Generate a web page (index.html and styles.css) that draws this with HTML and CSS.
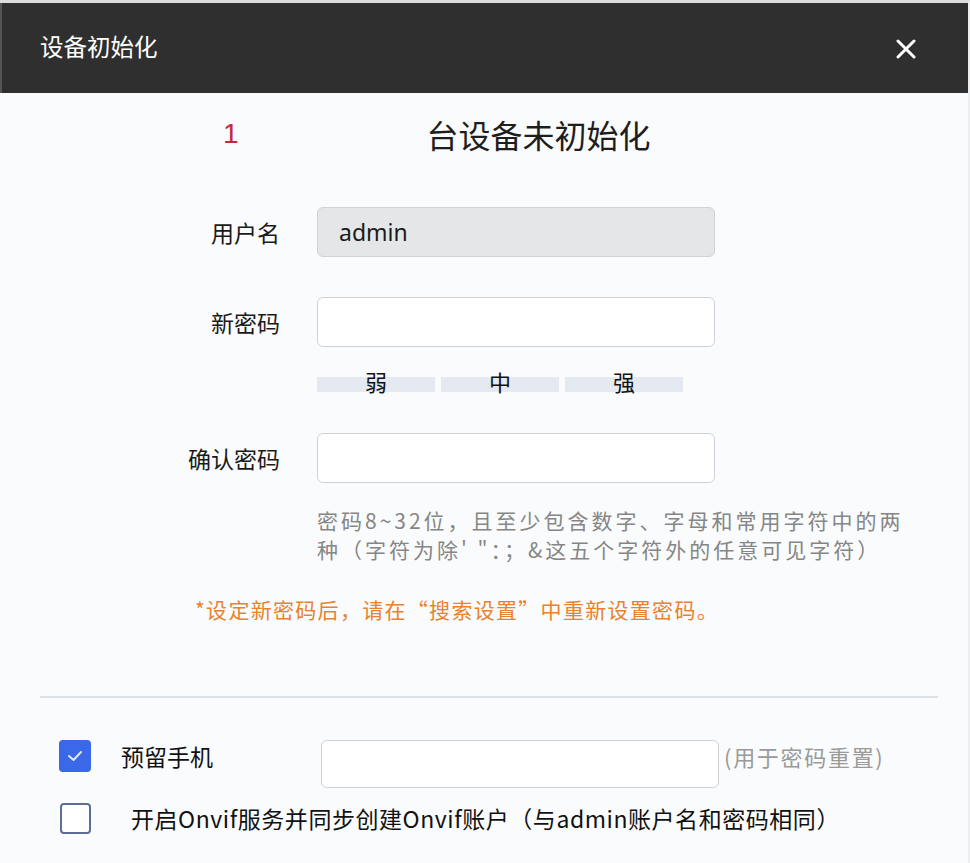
FILE: index.html
```html
<!DOCTYPE html>
<html lang="zh-CN">
<head>
<meta charset="utf-8">
<title>设备初始化</title>
<link rel="stylesheet" href="styles.css">
</head>
<body>
<div class="dialog">
  <div class="header">
    <div class="header-title">设备初始化</div>
    <svg class="close" width="20" height="20" viewBox="0 0 20 20"><path d="M2 2 L18 18 M18 2 L2 18" stroke="#fff" stroke-width="3" stroke-linecap="round"/></svg>
  </div>
  <div class="body">
    <div class="count-row">
      <span class="count">1</span>
      <span class="count-text">台设备未初始化</span>
    </div>
    <div class="row row-first">
      <div class="label">用户名</div>
      <div class="input input-disabled">admin</div>
    </div>
    <div class="row row-gap">
      <div class="label">新密码</div>
      <div class="input"></div>
    </div>
    <div class="strength">
      <div class="bar"><span>弱</span></div>
      <div class="bar"><span>中</span></div>
      <div class="bar"><span>强</span></div>
    </div>
    <div class="row row-confirm">
      <div class="label">确认密码</div>
      <div class="input"></div>
    </div>
    <div class="hint">密码8~32位，且至少包含数字、字母和常用字符中的两<br>种（字符为除' "：；&amp;这五个字符外的任意可见字符）</div>
    <div class="warn">*设定新密码后，请在“搜索设置”中重新设置密码。</div>
    <div class="divider"></div>
    <div class="check-row">
      <span class="checkbox checked"><svg width="16" height="12" viewBox="0 0 16 12"><path d="M2 6 L6.5 10 L14 2" fill="none" stroke="#fff" stroke-width="2" stroke-linecap="round" stroke-linejoin="round" opacity="0.85"/></svg></span>
      <span class="check-label">预留手机</span>
      <div class="phone-input"></div>
      <span class="phone-hint">(用于密码重置)</span>
    </div>
    <div class="check-row2">
      <span class="checkbox unchecked"></span>
      <span class="check-label2">开启Onvif服务并同步创建Onvif账户（与admin账户名和密码相同）</span>
    </div>
  </div>
</div>
</body>
</html>
```
FILE: styles.css
```css
* { box-sizing: border-box; }
html, body { margin: 0; padding: 0; }
body {
  font-family: "Noto Sans CJK SC", "Noto Sans", sans-serif;
  background: #fafbfc;
  color: #222;
}
.dialog {
  width: 970px;
  height: 863px;
  border-top: 3px solid #dcdcdc;
  border-right: 2px solid #eceef0;
  background: #fafbfc;
  overflow: hidden;
}
.header {
  height: 90px;
  background: #2f2f2f;
  display: flex;
  align-items: center;
  justify-content: space-between;
  padding: 0 52px 0 40px;
  border-left: 2px solid #555;
}
.header-title {
  color: #fff;
  font-size: 23.5px;
  margin-left: -2px;
  margin-top: -4px;
}
.close { margin-top: 2px; }
.body { padding: 0; }
.count-row {
  display: flex;
  align-items: center;
  height: 40px;
  margin-top: 21px;
}
.count {
  color: #c4283a;
  font-size: 28px;
  margin-left: 223px;
  font-family: "Liberation Sans", "Noto Sans", sans-serif;
}
.count-text {
  font-size: 32px;
  margin-left: 188px;
  color: #1e1e1e;
}
.row { display: flex; align-items: center; }
.row-first { margin-top: 53px; }
.row-gap { margin-top: 40px; }
.row-confirm { margin-top: 41px; }
.label {
  width: 280px;
  text-align: right;
  font-size: 23px;
  color: #1a1a1a;
}
.input {
  margin-left: 37px;
  width: 398px;
  height: 50px;
  border: 1px solid #cfd3d8;
  border-radius: 6px;
  background: #fff;
  font-size: 23px;
  padding-left: 21px;
  display: flex;
  align-items: center;
}
.input-disabled {
  background: #e5e6e8;
  font-family: "Noto Sans", sans-serif;
  color: #1a1a1a;
}
.strength {
  display: flex;
  gap: 6px;
  margin-left: 317px;
  margin-top: 30px;
}
.bar {
  width: 118px;
  height: 15px;
  background: #e5eaf2;
  display: flex;
  justify-content: center;
  align-items: center;
}
.bar span {
  font-size: 22px;
  line-height: 15px;
  margin-top: -6px;
  color: #111;
}
.hint {
  margin-left: 317px;
  margin-top: 23px;
  font-size: 21px;
  line-height: 29px;
  color: #868686;
  letter-spacing: 3px;
}
.warn {
  margin-left: 195px;
  margin-top: 31px;
  font-size: 21px;
  line-height: 29px;
  color: #e8822c;
  letter-spacing: 1.3px;
}
.divider {
  margin: 72px 30px 0 40px;
  height: 2px;
  background: #dde2e8;
}
.check-row {
  display: flex;
  align-items: flex-start;
  margin-top: 42px;
  height: 48px;
}
.checkbox {
  width: 32px;
  height: 32px;
  border-radius: 4px;
  flex: none;
  display: flex;
  align-items: center;
  justify-content: center;
}
.checked {
  background: #3a68e8;
  margin-left: 59px;
}
.unchecked {
  border: 2px solid #5d6e96;
  margin-left: 60px;
  width: 31px;
  height: 31px;
  background: #fff;
}
.check-label {
  font-size: 23px;
  margin-left: 30px;
  line-height: 32px;
  color: #111;
}
.phone-input {
  margin-left: 108px;
  width: 398px;
  height: 48px;
  border: 1px solid #cfd3d8;
  border-radius: 6px;
  background: #fff;
}
.phone-hint {
  margin-left: 5px;
  font-size: 22px;
  line-height: 32px;
  color: #9a9a9a;
  letter-spacing: 1.7px;
}
.check-row2 {
  display: flex;
  align-items: center;
  margin-top: 13px;
}
.check-label2 {
  margin-left: 40px;
  font-size: 23px;
  color: #111;
  letter-spacing: 0.55px;
}
```
